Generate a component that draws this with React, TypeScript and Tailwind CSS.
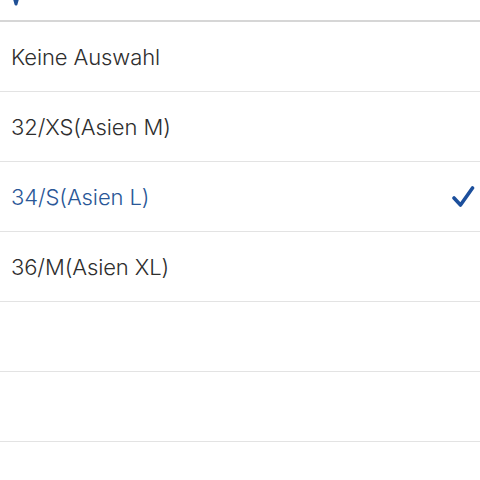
const options = [
  { label: "Keine Auswahl", selected: false },
  { label: "32/XS(Asien M)", selected: false },
  { label: "34/S(Asien L)", selected: true },
  { label: "36/M(Asien XL)", selected: false },
  { label: "", selected: false },
  { label: "", selected: false },
  { label: "", selected: false },
];

function CheckMark() {
  return (
    <svg width="24" height="24" viewBox="0 0 24 24">
      <path
        d="M3 13 L9.5 20 L21.5 3"
        fill="none"
        stroke="#1c4f9c"
        strokeWidth="3.6"
        strokeLinecap="round"
        strokeLinejoin="round"
      />
    </svg>
  );
}

export default function App() {
  return (
    <div
      className="w-[480px] h-[480px] overflow-hidden bg-white"
      style={{ fontFamily: 'Inter, "Liberation Sans", Arial, sans-serif' }}
    >
      {/* Header (mostly scrolled off) */}
      <div className="h-[22px] border-b-2 border-[#d6d6d6] overflow-hidden flex items-end">
        <svg width="14" height="22" viewBox="0 0 14 22" className="ml-[9px] mb-[-2px]">
          <path
            d="M3 2 L7 16 L11 2"
            fill="none"
            stroke="#1f4f95"
            strokeWidth="3"
            strokeLinecap="round"
            strokeLinejoin="round"
            transform="translate(0 -12)"
          />
        </svg>
      </div>

      {/* Option list */}
      <ul>
        {options.map((opt, i) => (
          <li
            key={i}
            className="h-[70px] border-b border-[#e3e3e3] flex items-center justify-between pl-[11px] pr-[5px]"
          >
            <span
              className={`text-[22px] font-light tracking-[-0.1px] pt-[1px] ${
                opt.selected ? "text-[#2a5797]" : "text-[#2e2e2e]"
              }`}
            >
              {opt.label}
            </span>
            {opt.selected && <CheckMark />}
          </li>
        ))}
      </ul>
    </div>
  );
}
